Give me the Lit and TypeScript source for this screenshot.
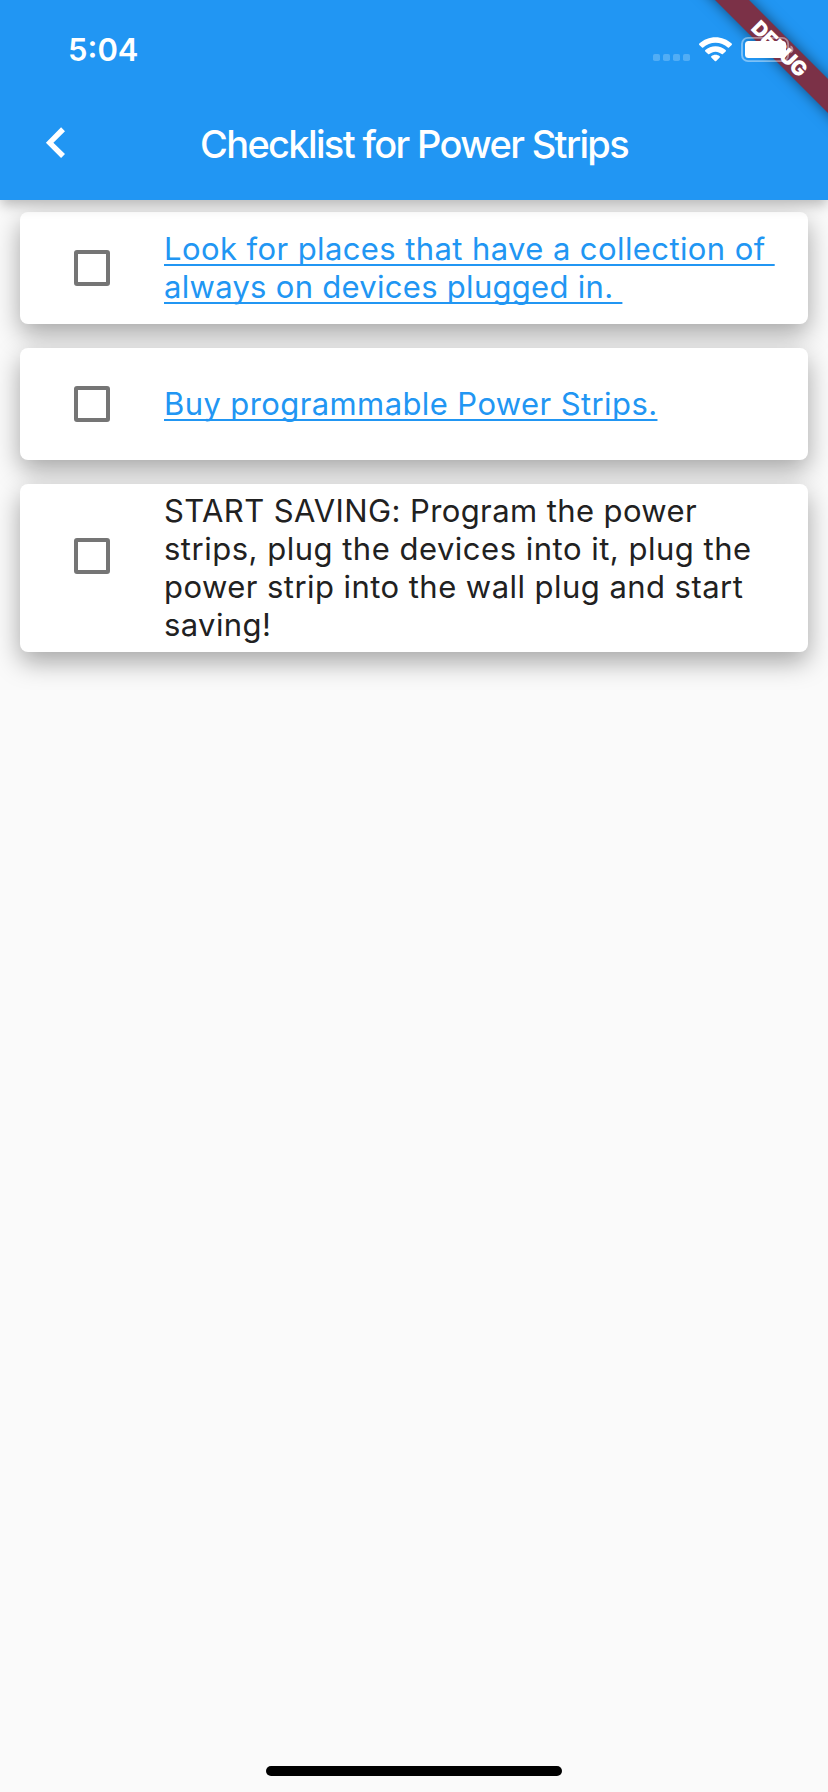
import { LitElement, html, css } from "lit";
import { customElement, property } from "lit/decorators.js";
import { classMap } from "lit/directives/class-map.js";

interface Line {
  text: string;
  spacing: number;
}

interface Item {
  link: boolean;
  lines: Line[];
}

const ITEMS: Item[] = [
  {
    link: true,
    lines: [
      { text: "Look for places that have a collection of ", spacing: 0.406 },
      { text: "always on devices plugged in. ", spacing: 0.29 },
    ],
  },
  {
    link: true,
    lines: [{ text: "Buy programmable Power Strips.", spacing: 0.4 }],
  },
  {
    link: false,
    lines: [
      { text: "START SAVING: Program the power", spacing: 0.4 },
      { text: "strips, plug the devices into it, plug the", spacing: 0.5 },
      { text: "power strip into the wall plug and start", spacing: 0.45 },
      { text: "saving!", spacing: 0.4 },
    ],
  },
];

@customElement("status-bar")
export class StatusBar extends LitElement {
  static styles = css`
    :host {
      display: flex;
      justify-content: space-between;
      height: 100px;
      box-sizing: border-box;
      padding: 31px 34px 0 68px;
      color: #fff;
    }
    .time {
      font-weight: 600;
      font-size: 31px;
      line-height: 38px;
    }
    .icons {
      display: block;
      margin-top: 5px;
    }
  `;
  render() {
    return html`
      <span class="time">5:04</span>
      <svg class="icons" width="142" height="27" viewBox="652 36 142 27">
        <g fill="#fff" fill-opacity="0.22">
          <rect x="653" y="54" width="7" height="7" rx="1.8" />
          <rect x="663" y="54" width="7" height="7" rx="1.8" />
          <rect x="673" y="54" width="7" height="7" rx="1.8" />
          <rect x="683" y="54" width="7" height="7" rx="1.8" />
        </g>
        <g fill="#fff">
          <path d="M715.5 37.2c6.1 0 11.900 2.300 16.200 6.400.4.4.4.9 0 1.300l-2.700 2.700c-.3.3-.8.3-1.200 0-3.300-3.100-7.700-4.800-12.300-4.800s-9 1.700-12.300 4.800c-.4.3-.9.3-1.200 0l-2.700-2.700c-.4-.4-.4-.9 0-1.300 4.300-4.100 10.100-6.400 16.200-6.400z" />
          <path d="M715.500 46.200c3.800 0 7.400 1.400 10.200 3.900.4.400.4.9 0 1.300l-2.800 2.700c-.3.300-.8.3-1.200 0-1.700-1.500-3.900-2.400-6.200-2.400s-4.500.9-6.200 2.400c-.4.3-.9.3-1.200 0l-2.800-2.700c-.4-.4-.4-.9 0-1.300 2.800-2.500 6.400-3.900 10.200-3.900z" />
          <path d="M715.500 54.800c1.600 0 3 .5 4.200 1.500.4.300.4.800 0 1.200l-3.500 3.400c-.4.4-1 .4-1.400 0l-3.500-3.400c-.4-.4-.4-.9 0-1.200 1.200-1 2.600-1.500 4.200-1.500z" />
        </g>
        <rect x="742" y="37.900" width="46.200" height="23.200" rx="6" fill="none" stroke="#fff" stroke-opacity="0.42" stroke-width="1.900" />
        <rect x="745" y="41" width="41" height="17" rx="3.500" fill="#fff" />
        <path d="M790.400 45.500c1.900.6 3 2.200 3 4s-1.100 3.400-3 4z" fill="#fff" fill-opacity="0.45" />
      </svg>
    `;
  }
}

@customElement("check-card")
export class CheckCard extends LitElement {
  @property({ attribute: false }) item!: Item;

  static styles = css`
    :host {
      display: flex;
      align-items: center;
      min-height: 112px;
      box-sizing: border-box;
      padding: 8px 20px 8px 54px;
      border-radius: 8px;
      background: #fff;
      box-shadow: 0 10px 26px rgba(0, 0, 0, 0.34);
    }
    .box {
      flex: none;
      width: 36px;
      height: 36px;
      box-sizing: border-box;
      border: 4px solid #757575;
      border-radius: 3px;
      margin-right: 54px;
    }
    .box.raised {
      margin-bottom: 24px;
    }
    .line {
      display: block;
      white-space: pre;
      font-size: 31px;
      line-height: 38px;
      color: #212121;
    }
    .link .line {
      color: #2196f3;
    }
    .link .line span {
      text-decoration: underline;
      text-decoration-thickness: 2px;
      text-underline-offset: 4px;
      text-decoration-skip-ink: none;
    }
  `;
  render() {
    const { link, lines } = this.item;
    return html`
      <div class=${classMap({ box: true, raised: lines.length > 2 })}></div>
      <div class=${classMap({ label: true, link })}>
        ${lines.map(
          (l) => html`<div class="line"><span style="letter-spacing:${l.spacing}px">${l.text}</span></div>`
        )}
      </div>
    `;
  }
}

@customElement("app-root")
export class AppRoot extends LitElement {
  static styles = css`
    :host {
      display: flex;
      flex-direction: column;
      position: relative;
      width: 828px;
      height: 1792px;
      overflow: hidden;
      background: #fafafa;
      font-family: Inter, "Liberation Sans", sans-serif;
    }
    .header {
      position: relative;
      z-index: 1;
      height: 200px;
      background: #2196f3;
      box-shadow: 0 6px 12px -1px rgba(0, 0, 0, 0.26);
      color: #fff;
    }
    status-bar {
      position: relative;
      z-index: 2;
    }
    .nav {
      display: grid;
      grid-template-columns: 112px 1fr 112px;
      align-items: center;
      height: 88px;
    }
    .back {
      display: block;
      margin: 0 0 2px 44px;
    }
    .title {
      margin: 0;
      text-align: center;
      white-space: nowrap;
      font-size: 38px;
      line-height: 46px;
      font-weight: 500;
      letter-spacing: -1.64px;
    }
    .list {
      flex: 1;
      display: flex;
      flex-direction: column;
      gap: 24px;
      padding: 12px 20px;
    }
    .ribbon {
      position: absolute;
      z-index: 1;
      top: 36px;
      left: 660px;
      width: 240px;
      height: 24px;
      transform: rotate(45deg);
      background: #7b3147;
      box-shadow: 0 0 14px rgba(0, 0, 0, 0.5);
      text-align: center;
      color: #fff;
      font-size: 20.4px;
      line-height: 26px;
      font-weight: 900;
      letter-spacing: -0.4px;
    }
    .home {
      align-self: center;
      width: 296px;
      height: 10px;
      border-radius: 5px;
      margin-bottom: 16px;
      background: #000;
    }
  `;
  render() {
    return html`
      <div class="header">
        <status-bar></status-bar>
        <div class="ribbon">DEBUG</div>
        <div class="nav">
          <svg class="back" width="24" height="34" viewBox="44 126 24 34">
            <path d="M61.100 127.300l3.900 3.900-11.600 11.500 11.600 11.400-3.900 3.900-15.200-15.300z" fill="#fff" />
          </svg>
          <h1 class="title">Checklist for Power Strips</h1>
        </div>
      </div>
      <div class="list">
        ${ITEMS.map((i) => html`<check-card .item=${i}></check-card>`)}
      </div>
      <div class="home"></div>
    `;
  }
}
